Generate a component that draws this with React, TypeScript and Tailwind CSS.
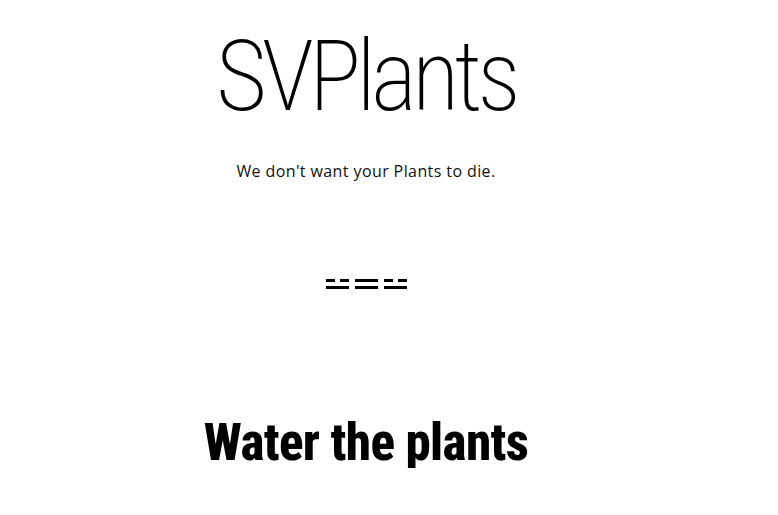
const rows = [
  [[9, 9], [23], [9, 9]],
  [[23], [23], [23]],
];

function Divider() {
  return (
    <div className="flex flex-col gap-[4px]">
      {rows.map((row, r) => (
        <div key={r} className="flex gap-[6px]">
          {row.map((group, g) => (
            <div key={g} className="flex w-[23px] justify-between">
              {group.map((w, i) => (
                <div key={i} className={`h-[3px] bg-black ${w === 9 ? "w-[9px]" : "w-[23px]"}`} />
              ))}
            </div>
          ))}
        </div>
      ))}
    </div>
  );
}

export default function App() {
  return (
    <div className="w-[732px] bg-white pt-[28px] text-black">
      <div className="flex flex-col items-center text-center">
        <h1 className="font-['Roboto_Condensed',sans-serif] text-[98px] font-extralight leading-none tracking-[-5px]">
          SVPlants
        </h1>
        <p className="mt-[35px] font-['Open_Sans',sans-serif] text-[16px] leading-[20px] tracking-[0.4px] text-[#111]">
          We don't want your Plants to die.
        </p>
        <div className="mt-[98px]">
          <Divider />
        </div>
        <h2 className="mt-[128px] font-['Roboto_Condensed',sans-serif] text-[51px] font-extrabold leading-none tracking-[-0.6px]">
          Water the plants
        </h2>
      </div>
    </div>
  );
}
